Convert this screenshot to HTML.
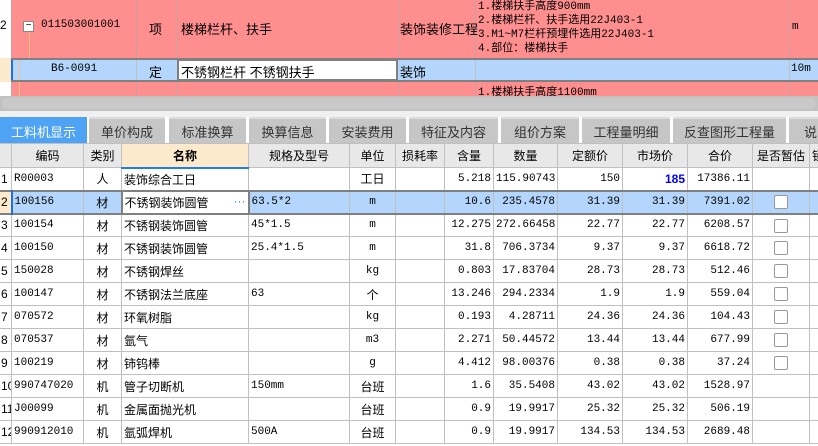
<!DOCTYPE html>
<html><head><meta charset="utf-8"><style>
*{margin:0;padding:0;box-sizing:border-box}
body{width:818px;height:446px;overflow:hidden;background:#fff;position:relative;font-family:"Liberation Sans","Noto Sans CJK SC",sans-serif;font-size:12px;color:#000}
.a{position:absolute;white-space:nowrap;overflow:hidden}
table{border-collapse:collapse;table-layout:fixed;position:absolute}
td{border:1px solid #c0c0c0;height:23px;padding:0 2px;white-space:nowrap;overflow:hidden;font-size:12px}
tr td:first-child{padding:0 0 0 1px}
.mono{font-family:"Liberation Mono","Noto Sans CJK SC",monospace;font-size:11px}
.r{text-align:right}.c{text-align:center}
.tab{position:absolute;top:117px;height:27px;background:#c6c6c6;border-top:2px solid #dcdcdc;color:#333;font-size:13px;text-align:center;line-height:25px;font-family:"Noto Sans CJK SC",sans-serif}
.cb{display:inline-block;width:14px;height:14px;border:1px solid #999;border-radius:2px;background:#fff;vertical-align:middle}
</style></head><body>
<div class="a" style="left:11px;top:0;width:807px;height:96px;background:#ff8f8f"></div>
<div class="a" style="left:0;top:58px;width:11px;height:24px;background:#fde9cc"></div>
<div class="a" style="left:0;top:18px;font-size:12px">2</div>
<div class="a" style="left:136px;top:0;width:1px;height:96px;background:#c8a0a0"></div>
<div class="a" style="left:177px;top:0;width:1px;height:96px;background:#c8a0a0"></div>
<div class="a" style="left:398px;top:0;width:1px;height:96px;background:#c8a0a0"></div>
<div class="a" style="left:475px;top:0;width:1px;height:96px;background:#c8a0a0"></div>
<div class="a" style="left:789px;top:0;width:1px;height:96px;background:#c8a0a0"></div>
<div class="a" style="left:11px;top:0;width:1px;height:96px;background:#c8a0a0"></div>
<div class="a" style="left:23px;top:21px;width:11px;height:11px;border:1px solid #888;background:#fff;font-size:10px;line-height:8px;text-align:center">−</div>
<div class="a" style="left:29px;top:33px;width:1px;height:37px;background:#f5c080"></div>
<div class="a" style="left:29px;top:69px;width:16px;height:1px;background:#f5c080"></div>
<div class="a" style="left:19px;top:60px;width:1px;height:36px;background:#f5c080"></div>
<div class="a mono" style="left:41px;top:19px">011503001001</div>
<div class="a" style="left:149px;top:19px;font-size:13px">项</div>
<div class="a" style="left:181px;top:19px;font-size:13px">楼梯栏杆、扶手</div>
<div class="a" style="left:400px;top:19px;font-size:13px">装饰装修工程</div>
<div class="a mono" style="left:478px;top:0;font-size:11px;line-height:14px">1.楼梯扶手高度900mm<br>2.楼梯栏杆、扶手选用22J403-1<br>3.M1~M7栏杆预埋件选用22J403-1<br>4.部位：楼梯扶手</div>
<div class="a mono" style="left:792px;top:21px">m</div>
<div class="a" style="left:11px;top:58px;width:807px;height:24px;background:#b4d6fc;border-top:2px solid #808080;border-bottom:2px solid #808080"></div>
<div class="a" style="left:11px;top:60px;width:2px;height:20px;background:#1e6fe0"></div>
<div class="a" style="left:19px;top:60px;width:1px;height:20px;background:#f5c080"></div>
<div class="a" style="left:136px;top:60px;width:1px;height:20px;background:#c0c0c0"></div>
<div class="a" style="left:475px;top:60px;width:1px;height:20px;background:#c0c0c0"></div>
<div class="a" style="left:789px;top:60px;width:1px;height:20px;background:#c0c0c0"></div>
<div class="a" style="left:177px;top:59px;width:221px;height:22px;background:#fff;border:2px solid #808080"></div>
<div class="a mono" style="left:51px;top:63px">B6-0091</div>
<div class="a" style="left:149px;top:62px;font-size:13px">定</div>
<div class="a" style="left:181px;top:62px;font-size:13px">不锈钢栏杆 不锈钢扶手</div>
<div class="a" style="left:400px;top:62px;font-size:13px">装饰</div>
<div class="a mono" style="left:791px;top:63px">10m</div>
<div class="a mono" style="left:478px;top:83px;font-size:11px">1.楼梯扶手高度1100mm</div>
<div class="a" style="left:0;top:96px;width:818px;height:15px;background:#c2c2c2"></div>
<div class="a" style="left:2px;top:98px;width:814px;height:11px;background:#c9c9c9;border-radius:6px"></div>
<div class="a" style="left:0;top:111px;width:818px;height:6px;background:#f0f0f0"></div>
<div class="tab" style="left:0;width:87px;background:#4fa3f5;border-top-color:#4fa3f5;color:#fff">工料机显示</div>
<div class="tab" style="left:89px;width:76px">单价构成</div>
<div class="tab" style="left:169px;width:77px">标准换算</div>
<div class="tab" style="left:249px;width:77px">换算信息</div>
<div class="tab" style="left:329px;width:77px">安装费用</div>
<div class="tab" style="left:409px;width:89px">特征及内容</div>
<div class="tab" style="left:501px;width:78px">组价方案</div>
<div class="tab" style="left:582px;width:88px">工程量明细</div>
<div class="tab" style="left:673px;width:113px">反查图形工程量</div>
<div class="tab" style="left:789px;width:40px;text-align:left;padding-left:15px">说明</div>
<table style="left:-1px;top:143px;width:830px">
<colgroup><col style="width:12px"><col style="width:72px"><col style="width:38px"><col style="width:127px"><col style="width:101px"><col style="width:46px"><col style="width:49px"><col style="width:49px"><col style="width:64px"><col style="width:65px"><col style="width:65px"><col style="width:65px"><col style="width:57px"><col style="width:20px"></colgroup>
<tr style="background:#e8e8e8;height:24px"><td></td><td class="c">编码</td><td class="c">类别</td><td class="c" style="background:#fde9cc;font-weight:bold;border-bottom:2px solid #1e7fe8">名称</td><td class="c">规格及型号</td><td class="c">单位</td><td class="c">损耗率</td><td class="c">含量</td><td class="c">数量</td><td class="c">定额价</td><td class="c">市场价</td><td class="c">合价</td><td class="c">是否暂估</td><td>锁</td></tr>
<tr><td>1</td><td class="mono">R00003</td><td class="c">人</td><td>装饰综合工日</td><td></td><td class="c">工日</td><td></td><td class="r mono">5.218</td><td class="r mono">115.90743</td><td class="r mono">150</td><td class="r" style="color:#0000ee;font-weight:bold">185</td><td class="r mono">17386.11</td><td></td><td></td></tr>
<tr style="background:#b4d6fc;border-top:2px solid #808080;border-bottom:2px solid #808080"><td style="background:#fde9cc;border-right:2px solid #1e6fe0">2</td><td class="mono">100156</td><td class="c">材</td><td style="background:#fff;border:2px solid #808080">不锈钢装饰圆管<span style="float:right;color:#3a80d0">···</span></td><td class="mono">63.5*2</td><td class="c mono">m</td><td></td><td class="r mono">10.6</td><td class="r mono">235.4578</td><td class="r mono">31.39</td><td class="r mono">31.39</td><td class="r mono">7391.02</td><td class="c"><span class="cb"></span></td><td></td></tr>
<tr><td>3</td><td class="mono">100154</td><td class="c">材</td><td>不锈钢装饰圆管</td><td class="mono">45*1.5</td><td class="c mono">m</td><td></td><td class="r mono">12.275</td><td class="r mono">272.66458</td><td class="r mono">22.77</td><td class="r mono">22.77</td><td class="r mono">6208.57</td><td class="c"><span class="cb"></span></td><td></td></tr>
<tr><td>4</td><td class="mono">100150</td><td class="c">材</td><td>不锈钢装饰圆管</td><td class="mono">25.4*1.5</td><td class="c mono">m</td><td></td><td class="r mono">31.8</td><td class="r mono">706.3734</td><td class="r mono">9.37</td><td class="r mono">9.37</td><td class="r mono">6618.72</td><td class="c"><span class="cb"></span></td><td></td></tr>
<tr><td>5</td><td class="mono">150028</td><td class="c">材</td><td>不锈钢焊丝</td><td></td><td class="c mono">kg</td><td></td><td class="r mono">0.803</td><td class="r mono">17.83704</td><td class="r mono">28.73</td><td class="r mono">28.73</td><td class="r mono">512.46</td><td class="c"><span class="cb"></span></td><td></td></tr>
<tr><td>6</td><td class="mono">100147</td><td class="c">材</td><td>不锈钢法兰底座</td><td class="mono">63</td><td class="c">个</td><td></td><td class="r mono">13.246</td><td class="r mono">294.2334</td><td class="r mono">1.9</td><td class="r mono">1.9</td><td class="r mono">559.04</td><td class="c"><span class="cb"></span></td><td></td></tr>
<tr><td>7</td><td class="mono">070572</td><td class="c">材</td><td>环氧树脂</td><td></td><td class="c mono">kg</td><td></td><td class="r mono">0.193</td><td class="r mono">4.28711</td><td class="r mono">24.36</td><td class="r mono">24.36</td><td class="r mono">104.43</td><td class="c"><span class="cb"></span></td><td></td></tr>
<tr><td>8</td><td class="mono">070537</td><td class="c">材</td><td>氩气</td><td></td><td class="c mono">m3</td><td></td><td class="r mono">2.271</td><td class="r mono">50.44572</td><td class="r mono">13.44</td><td class="r mono">13.44</td><td class="r mono">677.99</td><td class="c"><span class="cb"></span></td><td></td></tr>
<tr><td>9</td><td class="mono">100219</td><td class="c">材</td><td>铈钨棒</td><td></td><td class="c mono">g</td><td></td><td class="r mono">4.412</td><td class="r mono">98.00376</td><td class="r mono">0.38</td><td class="r mono">0.38</td><td class="r mono">37.24</td><td class="c"><span class="cb"></span></td><td></td></tr>
<tr><td>10</td><td class="mono">990747020</td><td class="c">机</td><td>管子切断机</td><td class="mono">150mm</td><td class="c">台班</td><td></td><td class="r mono">1.6</td><td class="r mono">35.5408</td><td class="r mono">43.02</td><td class="r mono">43.02</td><td class="r mono">1528.97</td><td></td><td></td></tr>
<tr><td>11</td><td class="mono">J00099</td><td class="c">机</td><td>金属面抛光机</td><td></td><td class="c">台班</td><td></td><td class="r mono">0.9</td><td class="r mono">19.9917</td><td class="r mono">25.32</td><td class="r mono">25.32</td><td class="r mono">506.19</td><td></td><td></td></tr>
<tr><td>12</td><td class="mono">990912010</td><td class="c">机</td><td>氩弧焊机</td><td class="mono">500A</td><td class="c">台班</td><td></td><td class="r mono">0.9</td><td class="r mono">19.9917</td><td class="r mono">134.53</td><td class="r mono">134.53</td><td class="r mono">2689.48</td><td></td><td></td></tr>
</table>
</body></html>
